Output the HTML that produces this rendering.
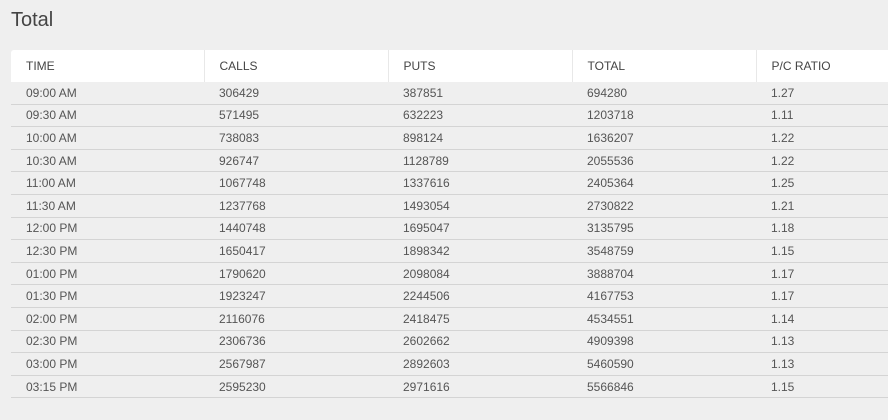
<!DOCTYPE html>
<html><head><style>
body{margin:0;background:#efefef;font-family:"Liberation Sans",sans-serif;color:#555;width:888px;height:420px;overflow:hidden;position:relative}
h1{position:absolute;left:11px;top:9px;margin:0;font-weight:normal;font-size:20px;color:#444}
table{position:absolute;left:11px;top:50px;border-collapse:collapse;table-layout:fixed;width:940px;font-size:12px}
th{background:#fff;height:32px;text-align:left;font-weight:normal;padding:0 0 0 15px;border-left:1px solid #e8e8e8;color:#444}
th:first-child{border-left:none;border-radius:3px 0 0 0}
td{height:21.6px;padding:0 0 0 15px;border-bottom:1px solid #d4d4d4;color:#555}
</style></head><body>
<h1>Total</h1>
<table>
<colgroup><col style="width:193px"><col style="width:184px"><col style="width:184px"><col style="width:184px"><col style="width:195px"></colgroup>
<tr><th>TIME</th><th>CALLS</th><th>PUTS</th><th>TOTAL</th><th>P/C RATIO</th></tr>
<tr><td>09:00 AM</td><td>306429</td><td>387851</td><td>694280</td><td>1.27</td></tr>
<tr><td>09:30 AM</td><td>571495</td><td>632223</td><td>1203718</td><td>1.11</td></tr>
<tr><td>10:00 AM</td><td>738083</td><td>898124</td><td>1636207</td><td>1.22</td></tr>
<tr><td>10:30 AM</td><td>926747</td><td>1128789</td><td>2055536</td><td>1.22</td></tr>
<tr><td>11:00 AM</td><td>1067748</td><td>1337616</td><td>2405364</td><td>1.25</td></tr>
<tr><td>11:30 AM</td><td>1237768</td><td>1493054</td><td>2730822</td><td>1.21</td></tr>
<tr><td>12:00 PM</td><td>1440748</td><td>1695047</td><td>3135795</td><td>1.18</td></tr>
<tr><td>12:30 PM</td><td>1650417</td><td>1898342</td><td>3548759</td><td>1.15</td></tr>
<tr><td>01:00 PM</td><td>1790620</td><td>2098084</td><td>3888704</td><td>1.17</td></tr>
<tr><td>01:30 PM</td><td>1923247</td><td>2244506</td><td>4167753</td><td>1.17</td></tr>
<tr><td>02:00 PM</td><td>2116076</td><td>2418475</td><td>4534551</td><td>1.14</td></tr>
<tr><td>02:30 PM</td><td>2306736</td><td>2602662</td><td>4909398</td><td>1.13</td></tr>
<tr><td>03:00 PM</td><td>2567987</td><td>2892603</td><td>5460590</td><td>1.13</td></tr>
<tr><td>03:15 PM</td><td>2595230</td><td>2971616</td><td>5566846</td><td>1.15</td></tr>
</table>
</body></html>
